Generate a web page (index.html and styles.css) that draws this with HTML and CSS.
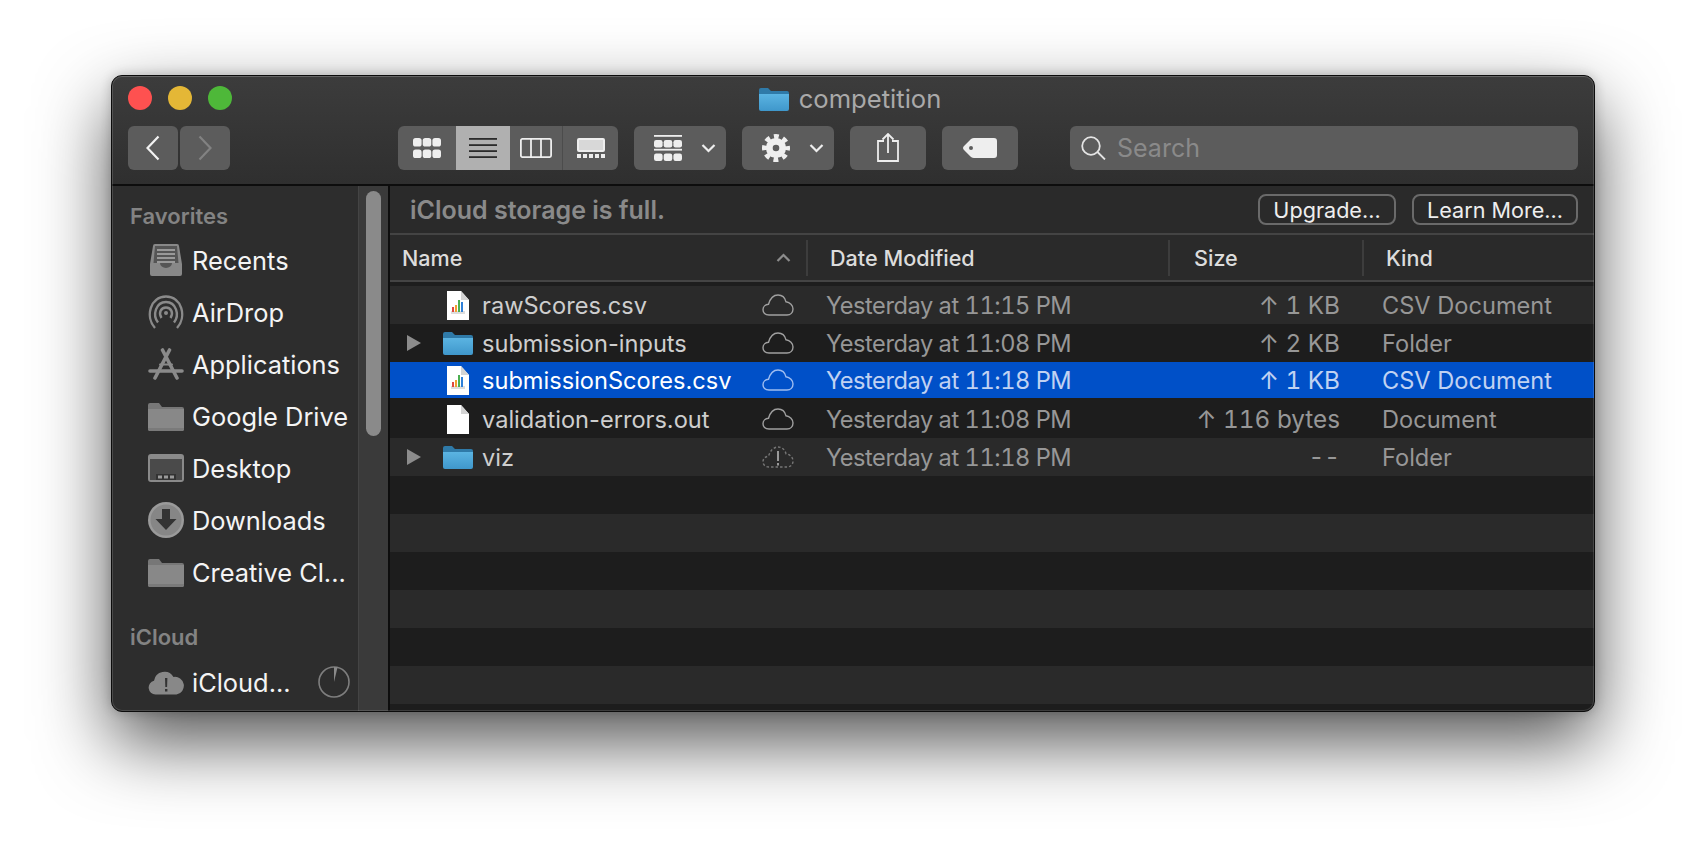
FILE: index.html
```html
<!DOCTYPE html>
<html>
<head>
  <meta name="viewport" content="width=device-width, initial-scale=1.0">
  <title>competition</title>
  <link rel="stylesheet" href="styles.css">
</head>
<body>

  <svg class="sprite" aria-hidden="true">
    <defs>
      <linearGradient id="blueFolder" x1="0" y1="0" x2="0" y2="1">
        <stop offset="0" stop-color="#5bb4e2"/>
        <stop offset="1" stop-color="#3f97cb"/>
      </linearGradient>
      <symbol id="folder-blue" viewBox="0 0 30 24">
        <path d="M0 3a2 2 0 0 1 2-2h7l3 3h16a2 2 0 0 1 2 2v4H0z" fill="#2f7aa8"/>
        <path d="M0 7h30v15a2 2 0 0 1-2 2H2a2 2 0 0 1-2-2z" fill="url(#blueFolder)"/>
      </symbol>
      <symbol id="folder-gray" viewBox="0 0 36 29">
        <path d="M0 3a2 2 0 0 1 2-2h9l3 4h20a2 2 0 0 1 2 2v4H0z" fill="#777"/>
        <path d="M0 7h36v20a2 2 0 0 1-2 2H2a2 2 0 0 1-2-2z" fill="#888"/>
        <path d="M0 26h36v1a2 2 0 0 1-2 2H2a2 2 0 0 1-2-2z" fill="#7a7a7a"/>
      </symbol>
      <symbol id="doc-blank" viewBox="0 0 22 29">
        <path d="M0 0h14l8 9v20H0z" fill="#fff"/>
        <path d="M14 0l8 9h-8z" fill="#d4d4d4"/>
      </symbol>
      <symbol id="doc-csv" viewBox="0 0 22 29">
        <path d="M0 0h14l8 9v20H0z" fill="#fff"/>
        <path d="M14 0l8 9h-8z" fill="#d4d4d4"/>
        <path d="M4 20h14v3H4z" fill="#ddd"/>
        <path d="M5 16h2v5H5z" fill="#e0483e"/>
        <path d="M8 14h2v7H8z" fill="#f0a030"/>
        <path d="M11 9h2v12h-2z" fill="#4caf50"/>
        <path d="M14 11h2v10h-2z" fill="#2f80d8"/>
      </symbol>
      <symbol id="cloud" viewBox="0 0 32 22">
        <path d="M7 21C3 21 1 18.500 1 15.800 1 12.800 3.300 10.500 6.500 10.300 8 5 11.500 1 16 1c4 0 7 2.800 8 6.800 4 .5 7 3.700 7 7.200 0 3.500-2.500 6-6 6z" fill="none" stroke="currentColor" stroke-width="1.400"/>
      </symbol>
      <symbol id="chev-down" viewBox="0 0 15 10">
        <path d="M1.500 2l6 6 6-6" fill="none" stroke="#eee" stroke-width="2.200"/>
      </symbol>
      <symbol id="triangle" viewBox="0 0 14 16">
        <path d="M0 0l14 8-14 8z" fill="#8c8c8c"/>
      </symbol>
    </defs>
  </svg>

  <div class="window">

    <div class="toolbar">
      <div class="titlebar">
        <div class="lights">
          <span class="light red"></span>
          <span class="light yellow"></span>
          <span class="light green"></span>
        </div>
        <div class="title">
          <svg class="title-folder"><use href="#folder-blue"/></svg>
          <span>competition</span>
        </div>
      </div>

      <div class="tools">
        <div class="nav-btns">
          <div class="btn nav-btn">
            <svg width="14" height="26" viewBox="0 0 14 26"><path d="M12.500 1.500L1.500 13l11 11.500" fill="none" stroke="#f2f2f2" stroke-width="2.200"/></svg>
          </div>
          <div class="btn nav-btn">
            <svg width="14" height="26" viewBox="0 0 14 26"><path d="M1.500 1.500L12.500 13l-11 11.500" fill="none" stroke="#828282" stroke-width="2.200"/></svg>
          </div>
        </div>

        <div class="btn view-group">
          <div class="view-seg seg-icons">
            <svg width="28" height="20" viewBox="0 0 28 20" fill="#eee">
              <rect x="0" y="0" width="8.600" height="8.500" rx="2.600"/><rect x="9.700" y="0" width="8.600" height="8.500" rx="2.600"/><rect x="19.400" y="0" width="8.600" height="8.500" rx="2.600"/>
              <rect x="0" y="11.500" width="8.600" height="8.500" rx="2.600"/><rect x="9.700" y="11.500" width="8.600" height="8.500" rx="2.600"/><rect x="19.400" y="11.500" width="8.600" height="8.500" rx="2.600"/>
            </svg>
          </div>
          <div class="view-seg seg-list">
            <svg width="28" height="20" viewBox="0 0 28 20" fill="#2b2b2b">
              <rect y="0" width="28" height="1.800"/><rect y="6.200" width="28" height="1.800"/><rect y="12.200" width="28" height="1.800"/><rect y="18.200" width="28" height="1.800"/>
            </svg>
          </div>
          <div class="view-seg seg-cols">
            <svg width="32" height="20" viewBox="0 0 32 20" fill="none" stroke="#eee" stroke-width="1.800">
              <rect x=".9" y=".9" width="30.200" height="18.200" rx="1.500"/><path d="M11 1v18M21 1v18"/>
            </svg>
          </div>
          <div class="view-seg seg-gallery">
            <svg width="28" height="20" viewBox="0 0 28 20">
              <rect x="1" y="1" width="26" height="12" rx="1" fill="#d8d8d8" stroke="#eee" stroke-width="2"/>
              <g fill="#eee"><rect x="0" y="16" width="4" height="4"/><rect x="6" y="16" width="4" height="4"/><rect x="12" y="16" width="4" height="4"/><rect x="18" y="16" width="4" height="4"/><rect x="24" y="16" width="4" height="4"/></g>
            </svg>
          </div>
        </div>

        <div class="btn tool-btn menu-btn">
          <svg width="28" height="26" viewBox="0 0 28 26" fill="#eee">
            <rect y="0" width="28" height="1.800"/>
            <rect x="0" y="5" width="8.600" height="7.500" rx="2.200"/><rect x="9.700" y="5" width="8.600" height="7.500" rx="2.200"/><rect x="19.400" y="5" width="8.600" height="7.500" rx="2.200"/>
            <rect y="13.800" width="28" height="1.800"/>
            <rect x="0" y="18.500" width="8.600" height="7.500" rx="2.200"/><rect x="9.700" y="18.500" width="8.600" height="7.500" rx="2.200"/><rect x="19.400" y="18.500" width="8.600" height="7.500" rx="2.200"/>
          </svg>
          <svg class="chev"><use href="#chev-down"/></svg>
        </div>

        <div class="btn tool-btn menu-btn">
          <svg width="28" height="28" viewBox="0 0 28 28" fill="none" stroke="#eee">
            <circle cx="14" cy="14" r="6.700" stroke-width="6.800"/>
            <circle cx="14" cy="14" r="11.500" stroke-width="5" stroke-dasharray="4.800 4.230" stroke-dashoffset="2.400"/>
          </svg>
          <svg class="chev"><use href="#chev-down"/></svg>
        </div>

        <div class="btn tool-btn share-btn">
          <svg width="22" height="29" viewBox="0 0 22 29" fill="none" stroke="#eee" stroke-width="1.800">
            <path d="M7 8H1v20h20V8h-6"/><path d="M11 20V1.500M5.500 6.500L11 1l5.500 5.500"/>
          </svg>
        </div>

        <div class="btn tool-btn tag-btn">
          <svg width="34" height="20" viewBox="0 0 34 20">
            <path fill-rule="evenodd" fill="#eee" d="M11 0h20a3 3 0 0 1 3 3v14a3 3 0 0 1-3 3H11c-1 0-2-.4-3-1L1 12c-1.300-1-1.300-3 0-4l7-7c1-.6 2-1 3-1zM8 8a2 2 0 1 0 0 4 2 2 0 0 0 0-4z"/>
          </svg>
        </div>

        <div class="btn search">
          <svg width="25" height="24" viewBox="0 0 25 24" fill="none" stroke="#e4e4e4" stroke-width="1.800">
            <circle cx="10" cy="10" r="8.800"/><path d="M16.500 16l7.500 7.500"/>
          </svg>
          <span>Search</span>
        </div>
      </div>
    </div>

    <div class="content">
      <div class="sidebar">
        <div class="side-list">
          <div class="side-label">Favorites</div>
          <div class="side-item">
            <svg width="32" height="32" viewBox="0 0 32 32">
              <path d="M3 2a2 2 0 0 1 2-2h22a2 2 0 0 1 2 2l3 18v10a2 2 0 0 1-2 2H2a2 2 0 0 1-2-2V20z" fill="#888"/>
              <path d="M5 2h22l1.500 17H22a6 5 0 0 1-12 0H3.500z" fill="#555"/>
              <path d="M7 5h18v2H7zM7 9h18v2H7zM7 13h18v2H7zM7 17h18v2H7z" fill="#999"/>
            </svg>
            <span>Recents</span>
          </div>
          <div class="side-item">
            <svg width="36" height="34" viewBox="0 0 36 34" fill="none" stroke="#8a8a8a" stroke-width="2.400">
              <path d="M7 33C-3 22 2 1.500 18 1.500S39 22 29 33"/>
              <path d="M10 27.500C4 20 8 7 18 7s14 13 8 20.500"/>
              <path d="M13.500 23C10 18 13 12.500 18 12.500S26 18 22.500 23"/>
              <circle cx="18" cy="18" r="2" fill="#8a8a8a" stroke="none"/>
            </svg>
            <span>AirDrop</span>
          </div>
          <div class="side-item">
            <svg width="36" height="32" viewBox="0 0 36 32" fill="none" stroke="#8a8a8a" stroke-linecap="round">
              <path d="M7 30L21.500 2M29 30L14.500 2" stroke-width="3.600"/>
              <path d="M2 23h32" stroke-width="3.600"/>
              <path d="M12 16.500h12" stroke-width="2"/>
            </svg>
            <span>Applications</span>
          </div>
          <div class="side-item">
            <svg class="side-folder"><use href="#folder-gray"/></svg>
            <span>Google Drive</span>
          </div>
          <div class="side-item">
            <svg width="36" height="28" viewBox="0 0 36 28">
              <rect width="36" height="28" rx="3" fill="#8a8a8a"/>
              <rect x="2" y="5" width="32" height="21" fill="#4a4a4a"/>
              <path d="M8 20h20v6H8z" fill="#333"/>
              <path d="M10 21.500h4v3h-4zM16 21.500h4v3h-4zM22 21.500h4v3h-4z" fill="#9a9a9a"/>
            </svg>
            <span>Desktop</span>
          </div>
          <div class="side-item">
            <svg width="36" height="36" viewBox="0 0 36 36">
              <circle cx="18" cy="18" r="18" fill="#9a9a9a"/>
              <circle cx="18" cy="18" r="15.500" fill="#868686"/>
              <path d="M14 7h8v10h6.500L18 28 7.500 17H14z" fill="#333"/>
            </svg>
            <span>Downloads</span>
          </div>
          <div class="side-item">
            <svg class="side-folder"><use href="#folder-gray"/></svg>
            <span>Creative Cl...</span>
          </div>
          <div class="side-label second">iCloud</div>
          <div class="side-item">
            <svg width="36" height="26" viewBox="0 0 36 26">
              <path d="M7.500 25.500a7 7 0 0 1-1.500-13.800A10.500 10.500 0 0 1 25.500 8a8.800 8.800 0 0 1 3 17.500z" fill="#888"/>
              <path d="M17 9h2.400l-.3 9h-1.800zM17 20h2.400v2.500H17z" fill="#333"/>
            </svg>
            <span>iCloud...</span>
            <svg class="quota" width="32" height="32" viewBox="0 0 32 32">
              <circle cx="16" cy="16" r="15" fill="none" stroke="#7e7e7e" stroke-width="1.600"/>
              <path d="M16 16V1l3.500.4z" fill="#8a8a8a"/>
            </svg>
          </div>
        </div>
        <div class="scroll-track"><div class="scroll-thumb"></div></div>
      </div>

      <div class="main">
        <div class="notice">
          <span class="notice-text">iCloud storage is full.</span>
          <span class="outline-btn upgrade">Upgrade...</span>
          <span class="outline-btn learn">Learn More...</span>
        </div>

        <div class="col-head">
          <div class="col col-name">
            <span>Name</span>
            <svg width="15" height="9" viewBox="0 0 15 9"><path d="M1.500 8l6-6 6 6" fill="none" stroke="#8c8c8c" stroke-width="2.200"/></svg>
          </div>
          <div class="col col-date">Date Modified</div>
          <div class="col col-size">Size</div>
          <div class="col col-kind">Kind</div>
        </div>

        <div class="rows">
          <div class="row">
            <span></span>
            <svg class="ico-doc"><use href="#doc-csv"/></svg>
            <span class="name">rawScores.csv</span>
            <svg class="ico-cloud"><use href="#cloud"/></svg>
            <span class="cell date">Yesterday at 11:15 PM</span>
            <span class="cell size">↑ 1 KB</span>
            <span class="cell kind">CSV Document</span>
          </div>
          <div class="row">
            <svg class="tri"><use href="#triangle"/></svg>
            <svg class="ico-folder"><use href="#folder-blue"/></svg>
            <span class="name">submission-inputs</span>
            <svg class="ico-cloud"><use href="#cloud"/></svg>
            <span class="cell date">Yesterday at 11:08 PM</span>
            <span class="cell size">↑ 2 KB</span>
            <span class="cell kind">Folder</span>
          </div>
          <div class="row selected">
            <span></span>
            <svg class="ico-doc"><use href="#doc-csv"/></svg>
            <span class="name">submissionScores.csv</span>
            <svg class="ico-cloud"><use href="#cloud"/></svg>
            <span class="cell date">Yesterday at 11:18 PM</span>
            <span class="cell size">↑ 1 KB</span>
            <span class="cell kind">CSV Document</span>
          </div>
          <div class="row">
            <span></span>
            <svg class="ico-doc"><use href="#doc-blank"/></svg>
            <span class="name">validation-errors.out</span>
            <svg class="ico-cloud"><use href="#cloud"/></svg>
            <span class="cell date">Yesterday at 11:08 PM</span>
            <span class="cell size">↑ 116 bytes</span>
            <span class="cell kind">Document</span>
          </div>
          <div class="row">
            <svg class="tri"><use href="#triangle"/></svg>
            <svg class="ico-folder"><use href="#folder-blue"/></svg>
            <span class="name">viz</span>
            <svg class="ico-cloud" viewBox="0 0 32 22">
              <path d="M7 21C3 21 1 18.500 1 15.800 1 12.800 3.300 10.500 6.500 10.300 8 5 11.500 1 16 1c4 0 7 2.800 8 6.800 4 .5 7 3.700 7 7.200 0 3.500-2.500 6-6 6z" fill="none" stroke="#777" stroke-width="1.400" stroke-dasharray="2.500 2"/>
              <path d="M15 5h2v10h-2zM15 17h2v2.500h-2z" fill="#9a9a9a"/>
            </svg>
            <span class="cell date">Yesterday at 11:18 PM</span>
            <span class="cell size none">--</span>
            <span class="cell kind">Folder</span>
          </div>
          <div class="row"></div>
          <div class="row"></div>
          <div class="row"></div>
          <div class="row"></div>
          <div class="row"></div>
          <div class="row"></div>
        </div>
      </div>
    </div>

  </div>

</body>
</html>
```

FILE: styles.css
```css
/* Finder window on a white desktop */
html, body {
  height: 100%;
}

body {
  margin: 0;
  background: #fff;
  overflow: hidden;
  font-family: 'Inter', 'Liberation Sans', sans-serif;
  padding: 75px 0 0 111px;
  box-sizing: border-box;
}

.sprite {
  position: absolute;
  width: 0;
  height: 0;
}

.window {
  position: relative;
  width: 1484px;
  height: 637px;
  box-sizing: border-box;
  display: flex;
  flex-direction: column;
  border: 1px solid #0c0c0c;
  border-radius: 11px;
  overflow: hidden;
  background: #2a2a2a;
  box-shadow: 0 30px 72px rgba(0, 0, 0, 0.68), 0 0 12px rgba(0, 0, 0, 0.2);
}

/* thin light edge that sits on top of the whole window */
.window::after {
  content: "";
  position: absolute;
  inset: 0;
  border-radius: 10px;
  box-shadow: inset 0 0 0 1px rgba(255, 255, 255, 0.14);
  pointer-events: none;
}

/* Toolbar */
.toolbar {
  height: 110px;
  flex-shrink: 0;
  box-sizing: border-box;
  background: linear-gradient(#3c3c3c, #2f2f2f);
  border-top: 1px solid #4c4c4c;
  border-bottom: 2px solid #0d0d0d;
}

.titlebar {
  height: 49px;
  position: relative;
}

.lights {
  position: absolute;
  left: 16px;
  top: 9px;
  display: flex;
  gap: 16px;
}

.light {
  width: 24px;
  height: 24px;
  border-radius: 50%;
}

.red { background: #fe5150; }
.yellow { background: #e4b736; }
.green { background: #4eb839; }

.title {
  display: flex;
  justify-content: center;
  align-items: center;
  gap: 10px;
  height: 100%;
  padding: 0 6px 6px 0;
  box-sizing: border-box;
  color: #a9a9a9;
  font-size: 25.6px;
}

.title-folder {
  width: 30px;
  height: 24px;
}

.tools {
  display: flex;
  height: 44px;
  padding: 0 16px;
}

.btn {
  background: #5c5c5c;
  border-radius: 6px;
  display: flex;
  align-items: center;
  justify-content: center;
}

.nav-btns {
  display: flex;
  gap: 2px;
  margin-right: 168px;
}

.nav-btn {
  width: 50px;
}

.view-group {
  width: 220px;
  overflow: hidden;
  align-items: stretch;
  margin-right: 16px;
}

.view-seg {
  display: flex;
  align-items: center;
  justify-content: center;
}

.seg-icons { width: 58px; }
.seg-list { width: 54px; background: #b0b0b0; }
.seg-cols { width: 53px; border-right: 1px solid #4c4c4c; box-sizing: border-box; }
.seg-gallery { width: 55px; }

.tool-btn {
  margin-right: 16px;
}

.menu-btn {
  width: 92px;
  gap: 19px;
  padding-left: 20px;
  box-sizing: border-box;
  justify-content: flex-start;
}

.share-btn { width: 76px; padding-bottom: 1px; box-sizing: border-box; }
.tag-btn { width: 76px; margin-right: 52px; }

.chev {
  width: 15px;
  height: 10px;
}

.search {
  flex: 1;
  justify-content: flex-start;
  padding-left: 11px;
  gap: 11px;
  color: #8a8a8a;
  font-size: 25px;
}

/* Sidebar */
.content {
  flex: 1;
  display: flex;
  min-height: 0;
}

.sidebar {
  width: 276px;
  flex-shrink: 0;
  display: flex;
  background: #2d2d2d;
  border-right: 2px solid #0d0d0d;
}

.side-list {
  width: 246px;
  flex-shrink: 0;
}

.side-label {
  color: #838383;
  font-size: 22px;
  font-weight: 600;
  line-height: 34px;
  padding: 13px 0 1px 18px;
}

.side-label.second {
  padding-top: 22px;
  padding-bottom: 2px;
}

.side-item {
  height: 52px;
  display: grid;
  grid-template-columns: 36px 1fr auto;
  column-gap: 8px;
  align-items: center;
  justify-items: start;
  color: #f4f4f4;
  font-size: 25.4px;
  padding-left: 36px;
  white-space: nowrap;
}

.side-item > svg:first-child {
  justify-self: center;
}

.side-folder {
  width: 36px;
  height: 29px;
}

.quota {
  margin-right: 8px;
}

.scroll-track {
  flex: 1;
  background: #3a3a3a;
  border-left: 1px solid #444;
  padding: 5px 7px;
}

.scroll-thumb {
  height: 245px;
  background: #8a8a8a;
  border-radius: 8px;
}

/* File list */
.main {
  flex: 1;
  display: flex;
  flex-direction: column;
  min-width: 0;
}

.notice {
  height: 49px;
  flex-shrink: 0;
  box-sizing: border-box;
  display: flex;
  align-items: center;
  padding: 0 16px 0 20px;
  background: #2a2a2a;
  border-bottom: 2px solid #444;
}

.notice-text {
  color: #8a8a8a;
  font-size: 25px;
  font-weight: 600;
  margin-right: auto;
}

.outline-btn {
  height: 31px;
  box-sizing: border-box;
  border: 2px solid #6a6a6a;
  border-radius: 8px;
  display: flex;
  align-items: center;
  justify-content: center;
  color: #eee;
  font-size: 21.6px;
}

.upgrade { width: 138px; margin-right: 16px; }
.learn { width: 166px; }

.col-head {
  height: 47px;
  flex-shrink: 0;
  box-sizing: border-box;
  display: grid;
  grid-template-columns: 416px 362px 194px 1fr;
  align-items: center;
  background: #2a2a2a;
  border-bottom: 2px solid #444;
  color: #dcdcdc;
  font-size: 21.6px;
}

.col {
  height: 36px;
  display: flex;
  align-items: center;
  box-sizing: border-box;
  font-weight: 500;
}

.col + .col {
  border-left: 2px solid #3d3d3d;
}

.col-name {
  padding: 0 15px 0 12px;
  justify-content: space-between;
}

.col-date { padding-left: 22px; }
.col-size { padding-left: 24px; }
.col-kind { padding-left: 22px; }

.rows {
  flex: 1;
  background: #1d1d1d;
  padding-top: 4px;
  overflow: hidden;
}

.row {
  height: 38px;
  display: grid;
  grid-template-columns: 53px 39px 280px 32px 374px 172px 1fr;
  align-items: center;
  color: #979797;
  font-size: 23.6px;
}

.row:nth-child(odd) {
  background: #2a2a2a;
}

.row .name {
  color: #cecece;
}

.row.selected {
  background: #0050c8;
  height: 36px;
  margin-bottom: 2px;
  color: #c0d2f2;
}

.row.selected .name {
  color: #fff;
}

.row.selected .ico-cloud {
  color: #9fbdf0;
}

.tri {
  width: 14px;
  height: 16px;
  margin-left: 17px;
}

.ico-doc {
  width: 22px;
  height: 29px;
  margin-left: 4px;
}

.ico-folder {
  width: 30px;
  height: 24px;
}

.ico-cloud {
  width: 32px;
  height: 22px;
  color: #a0a0a0;
}

.date {
  padding-left: 32px;
  font-variant-numeric: tabular-nums;
  letter-spacing: -0.45px;
}

.size {
  text-align: right;
  font-size: 24.3px;
  font-variant-numeric: tabular-nums;
}

.size.none {
  font-feature-settings: "calt" 0;
}

.kind { padding-left: 42px; }
```
